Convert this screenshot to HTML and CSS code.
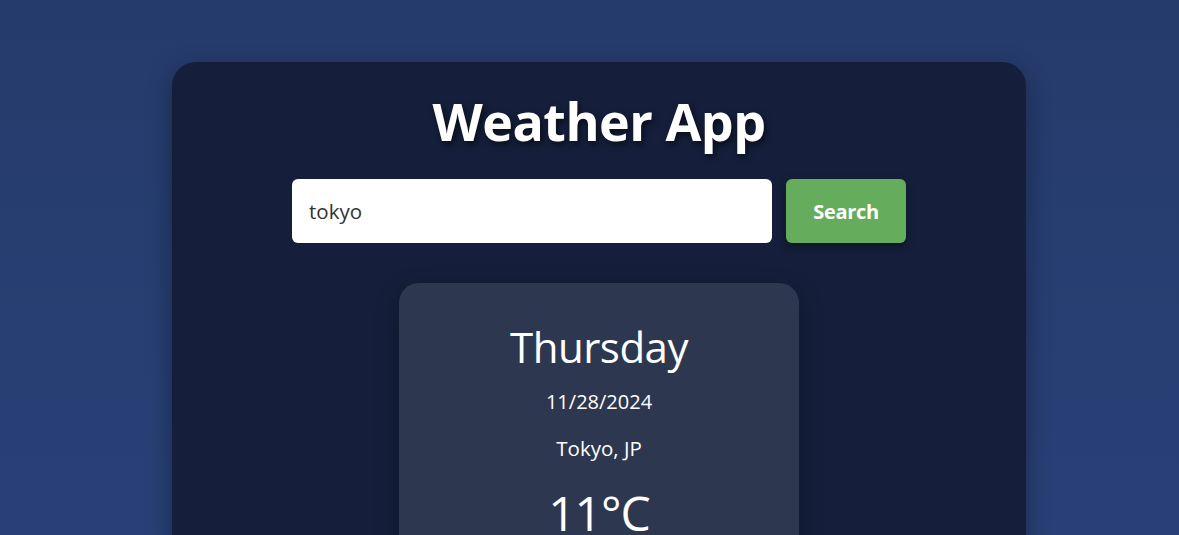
FILE: index.html
```html
<!DOCTYPE html>
<html lang="en">
<head>
<meta charset="utf-8">
<title>Weather App</title>
<link rel="stylesheet" href="styles.css">
</head>
<body>
<div class="page">
  <main class="app">
    <h1 class="title">Weather App</h1>
    <form class="search" onsubmit="return false">
      <input class="search-input" type="text" value="tokyo">
      <button class="search-btn" type="submit">Search</button>
    </form>
    <section class="card">
      <div class="day">Thursday</div>
      <div class="date">11/28/2024</div>
      <div class="city">Tokyo, JP</div>
      <div class="temp">11°C</div>
    </section>
  </main>
</div>
</body>
</html>
```
FILE: styles.css
```css
html, body {
  margin: 0;
  padding: 0;
}
body {
  min-height: 100vh;
  background: linear-gradient(180deg, #253b6b 0%, #2a437c 100%);
  font-family: "Open Sans", "Noto Sans", sans-serif;
  color: #fff;
  overflow: hidden;
}
.page {
  display: flex;
  justify-content: center;
  padding: 62px 0 0 19px;
}
.app {
  width: 854px;
  min-height: 700px;
  box-sizing: border-box;
  background: #151f3b;
  border-radius: 24px;
  box-shadow: 0 8px 24px rgba(0, 0, 0, 0.35);
  padding-top: 27px;
  display: flex;
  flex-direction: column;
  align-items: center;
}
.title {
  margin: 0;
  font-size: 52px;
  line-height: 64px;
  font-weight: 700;
  letter-spacing: -0.5px;
  text-shadow: 2px 3px 6px rgba(0, 0, 0, 0.6);
}
.search {
  margin-top: 26px;
  display: flex;
  gap: 14px;
}
.search-input {
  width: 480px;
  height: 64px;
  box-sizing: border-box;
  border: none;
  border-radius: 6px;
  background: #fff;
  padding: 0 17px;
  font-family: inherit;
  font-size: 20.5px;
  color: #333;
  outline: none;
}
.search-btn {
  width: 120px;
  height: 64px;
  border: none;
  border-radius: 6px;
  background: #66ac5d;
  color: #fff;
  font-family: inherit;
  font-size: 20px;
  font-weight: 700;
  letter-spacing: -0.3px;
  box-shadow: 0 4px 10px rgba(0, 0, 0, 0.35);
  cursor: pointer;
}
.card {
  margin-top: 40px;
  width: 400px;
  min-height: 400px;
  box-sizing: border-box;
  background: #2e3750;
  border-radius: 20px;
  box-shadow: 0 8px 24px rgba(0, 0, 0, 0.3);
  padding-top: 36px;
  display: flex;
  flex-direction: column;
  align-items: center;
  font-weight: 500;
}
.day {
  font-size: 42px;
  line-height: 56px;
  letter-spacing: -0.5px;
}
.date {
  margin-top: 13px;
  font-size: 20px;
  line-height: 28px;
}
.city {
  margin-top: 18px;
  font-size: 20.5px;
  line-height: 28px;
}
.temp {
  margin-top: 15px;
  font-size: 48px;
  line-height: 72px;
  letter-spacing: -1px;
}
```
